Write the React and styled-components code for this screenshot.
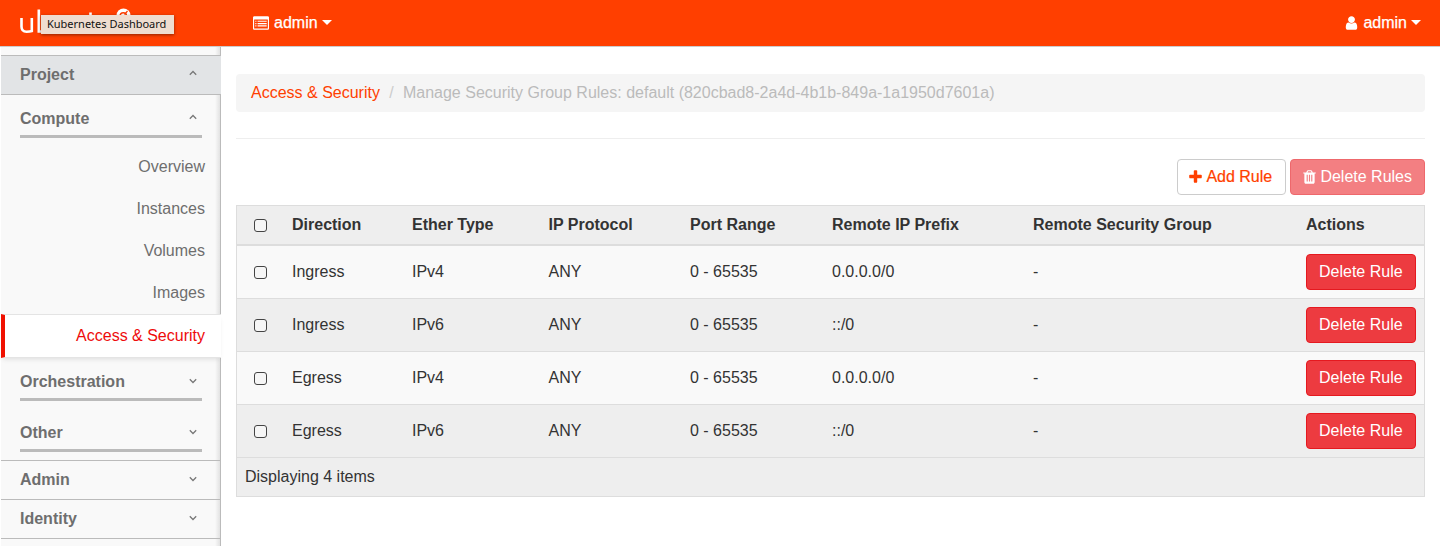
import React from 'react';
import styled, { createGlobalStyle, css } from 'styled-components';

const Global = createGlobalStyle`
  *, *::before, *::after { box-sizing: border-box; }
  html, body { margin: 0; background: #fff; }
  body {
    font: 16px/22px "Liberation Sans", Arial, sans-serif;
    color: #333;
    overflow: hidden;
  }
  #root { height: 546px; }
`;

const Page = styled.div`
  height: 546px;
  display: flex;
  flex-direction: column;
  overflow: hidden;
`;

const TopBar = styled.header`
  position: relative;
  flex: none;
  height: 47px;
  display: flex;
  align-items: flex-start;
  background: #ff3f00;
  border-bottom: 1px solid #ccc;
  color: #fff;
`;

const Brand = styled.div`
  width: 253px;
  height: 46px;
`;

const TopMenu = styled.div`
  display: flex;
  align-items: center;
  height: 46px;
  padding-bottom: 1px;
  margin-left: ${(p) => (p.$end ? 'auto' : 0)};
  margin-right: ${(p) => (p.$end ? '19px' : 0)};
`;

const MenuLabel = styled.span`
  height: 22px;
  margin: 0 4px 0 5px;
  -webkit-text-stroke: 0.25px #fff;
`;

const Caret = styled.span`
  border: 5px solid transparent;
  border-top-color: #fff;
  border-bottom: 0;
`;

const Tooltip = styled.div`
  position: absolute;
  left: 41px;
  top: 15px;
  width: 133px;
  height: 19px;
  display: flex;
  padding-left: 6px;
  background: #efddd0;
  color: #111;
  font: 11px/18px "Noto Sans", "Open Sans", sans-serif;
  white-space: nowrap;
  box-shadow: 0 1px 3px rgba(0, 0, 0, 0.45);
`;

const Icon = styled.svg`
  display: block;
  flex: none;
  height: 16px;
  width: ${(p) => p.$w}px;
  fill: currentColor;
`;

const Body = styled.div`
  flex: 1;
  display: flex;
  min-height: 0;
`;

const Sidebar = styled.nav`
  flex: none;
  width: 220px;
  margin-left: 1px;
  padding-top: 8px;
  color: #6e6e6e;
  background: linear-gradient(to left, #bbb 0, #bbb 1px, #e2e2e2 1px, #f9f9f9 6px);
`;

const Heading = styled.div`
  display: flex;
  justify-content: space-between;
  font-weight: bold;
  padding: 8px 24px 0 19px;
  height: ${(p) => p.$h}px;
  border-top: 1px solid #bbb;
  ${(p) => p.$open && css`
    background: #e2e4e6;
    border-bottom: 1px solid #bbb;
  `}
`;

const Group = styled.div`
  display: flex;
  justify-content: space-between;
  width: 182px;
  height: 30px;
  margin: ${(p) => p.$top}px 0 0 19px;
  padding-right: 5px;
  font-weight: bold;
  border-bottom: 3px solid #bbb;
`;

const Items = styled.div`
  padding-top: 8px;
`;

const Item = styled.div`
  height: 42px;
  padding: 0 16px 0 0;
  line-height: 42px;
  text-align: right;
  ${(p) => p.$active && css`
    height: 44px;
    border: solid #e4e4e4;
    border-width: 1px 0;
    border-left: 4px solid #f01000;
    background: #fff;
    color: #ee0b0b;
    box-shadow: 0 3px 5px -2px rgba(0, 0, 0, 0.12);
  `}
`;

const Chevron = styled.svg`
  width: 8px;
  height: 6px;
  margin-top: ${(p) => (p.$up ? 6 : 7)}px;
  fill: none;
  stroke: #777;
  stroke-width: 1.25;
  transform: ${(p) => (p.$up ? 'none' : 'rotate(180deg)')};
`;

const Main = styled.main`
  flex: 1;
  padding: 27px 15px 0;
`;

const Breadcrumb = styled.div`
  display: flex;
  height: 38px;
  padding: 8px 15px;
  border-radius: 4px;
  background: #f5f5f5;
  color: #bbb;
`;

const Crumb = styled.a`
  color: #ff3f00;
`;

const Slash = styled.span`
  width: 23px;
  text-align: center;
  color: #ccc;
`;

const Rule = styled.hr`
  height: 1px;
  margin: 26px 0 20px;
  border: 0;
  background: #eee;
`;

const Toolbar = styled.div`
  display: flex;
  justify-content: flex-end;
  gap: 4px;
  margin-bottom: 10px;
`;

const Button = styled.button`
  display: flex;
  align-items: center;
  gap: 4px;
  height: 36px;
  padding: 0 12px 1px;
  border: 1px solid ${(p) => (p.$danger ? '#e5191f' : '#ccc')};
  border-radius: 4px;
  background: ${(p) => (p.$danger ? '#ed3b40' : '#fff')};
  color: ${(p) => (p.$danger ? '#fff' : '#ff3f00')};
  font: inherit;
  white-space: nowrap;
  opacity: ${(p) => (p.$faded ? 0.65 : 1)};
`;

const AddButton = styled(Button)`
  width: 109px;
  padding-right: 11px;
  padding-left: 11px;
  -webkit-text-stroke: 0.2px #ff3f00;
`;

const Table = styled.div`
  border: 1px solid #ddd;
`;

const Row = styled.div`
  display: grid;
  grid-template-columns: 47px 120px 136.5px 141.5px 142px 201px 273px 1fr;
  align-items: center;
  height: ${(p) => (p.$head ? 40 : 53)}px;
  padding: 0 8px ${(p) => (p.$head ? 1 : 0)}px;
  border-bottom: ${(p) => (p.$head ? 2 : 1)}px solid #ddd;
  background: ${(p) => (p.$dark ? '#eee' : '#f9f9f9')};
  font-weight: ${(p) => (p.$head ? 'bold' : 'normal')};
`;

const Footer = styled.div`
  height: 38px;
  padding: 8px;
  background: #eee;
`;

const Check = styled.span`
  width: 13px;
  height: 13px;
  margin: ${(p) => (p.$head ? 2 : 1)}px 0 0 9px;
  border: 1px solid #444;
  border-radius: 3px;
  background: #f6f6f6;
`;

const Logo = () => (
  <svg width="253" height="46" viewBox="0 0 253 46" fill="none" stroke="#fff" strokeWidth="2.6">
    <path d="M21.5 18V26.5Q21.5 31.7 26.5 31.7Q30 31.7 31.8 31V18" />
    <path d="M38.8 9.5V31.5H44" />
    <path d="M90.5 12.5V31" />
    <circle cx="123.5" cy="15.5" r="7" fill="#fff" stroke="none" />
    <circle cx="123.3" cy="16" r="3.2" stroke="#ff3f00" strokeWidth="1.4" />
    <path d="M124.5 14.5L127.5 11" stroke="#ff3f00" strokeWidth="1.2" />
  </svg>
);

const ListIcon = () => (
  <Icon $w={16} viewBox="0 0 1792 1792">
    <path fillRule="evenodd" d="M160 128h1472q66 0 113 47t47 113v1216q0 66-47 113t-113 47H160q-66 0-113-47T0 1504V288q0-66 47-113t113-47zM128 544v928q0 32 32 32h1472q32 0 32-32V544q0-32-32-32H160q-32 0-32 32z" />
    <path d="M256 640h128v128H256zM512 640h1024v128H512zM256 896h128v128H256zM512 896h1024v128H512zM256 1152h128v128H256zM512 1152h1024v128H512z" />
  </Icon>
);

const UserIcon = () => (
  <Icon $w={13} viewBox="-64 0 1408 1792">
    <path d="M1280 1399q0 109-62.5 187t-150.5 78h-854q-88 0-150.5-78t-62.5-187q0-85 8.5-160.5t31.5-152 58.5-131 94-89 134.5-34.5q131 128 313 128t313-128q76 0 134.5 34.5t94 89 58.5 131 31.5 152 8.5 160.5zm-256-887q0 159-112.5 271.5t-271.5 112.5-271.5-112.5-112.5-271.5 112.5-271.5 271.5-112.5 271.5 112.5 112.5 271.5z" />
  </Icon>
);

const PlusIcon = () => (
  <Icon $w={13} viewBox="192 0 1408 1792">
    <path d="M1600 736v192q0 40-28 68t-68 28h-416v416q0 40-28 68t-68 28h-192q-40 0-68-28t-28-68v-416h-416q-40 0-68-28t-28-68v-192q0-40 28-68t68-28h416v-416q0-40 28-68t68-28h192q40 0 68 28t28 68v416h416q40 0 68 28t28 68z" />
  </Icon>
);

const TrashIcon = () => (
  <Icon $w={13} viewBox="192 0 1408 1792">
    <path d="M704 1376v-704q0-14-9-23t-23-9h-64q-14 0-23 9t-9 23v704q0 14 9 23t23 9h64q14 0 23-9t9-23zm256 0v-704q0-14-9-23t-23-9h-64q-14 0-23 9t-9 23v704q0 14 9 23t23 9h64q14 0 23-9t9-23zm256 0v-704q0-14-9-23t-23-9h-64q-14 0-23 9t-9 23v704q0 14 9 23t23 9h64q14 0 23-9t9-23zm-544-992h448l-48-117q-7-9-17-11h-317q-10 2-17 11zm928 32v64q0 14-9 23t-23 9h-96v948q0 83-47 143.5t-113 60.5h-832q-66 0-113-58.5t-47-141.5v-952h-96q-14 0-23-9t-9-23v-64q0-14 9-23t23-9h309l70-167q15-37 54-63t79-26h320q40 0 79 26t54 63l70 167h309q14 0 23 9t9 23z" />
  </Icon>
);

const Arrow = ({ up }) => (
  <Chevron $up={up} viewBox="0 0 8 6">
    <path d="M0.8 4.8L4 1.5L7.2 4.8" />
  </Chevron>
);

const columns = ['Direction', 'Ether Type', 'IP Protocol', 'Port Range', 'Remote IP Prefix', 'Remote Security Group', 'Actions'];
const rules = [
  ['Ingress', 'IPv4', 'ANY', '0 - 65535', '0.0.0.0/0', '-'],
  ['Ingress', 'IPv6', 'ANY', '0 - 65535', '::/0', '-'],
  ['Egress', 'IPv4', 'ANY', '0 - 65535', '0.0.0.0/0', '-'],
  ['Egress', 'IPv6', 'ANY', '0 - 65535', '::/0', '-'],
];

export default function App() {
  return (
    <Page>
      <Global />
      <TopBar>
        <Brand><Logo /></Brand>
        <TopMenu>
          <ListIcon />
          <MenuLabel>admin</MenuLabel>
          <Caret />
        </TopMenu>
        <TopMenu $end>
          <UserIcon />
          <MenuLabel>admin</MenuLabel>
          <Caret />
        </TopMenu>
        <Tooltip>Kubernetes Dashboard</Tooltip>
      </TopBar>
      <Body>
        <Sidebar>
          <Heading $open $h={40}>Project<Arrow up /></Heading>
          <Group $top={13}>Compute<Arrow up /></Group>
          <Items>
            <Item>Overview</Item>
            <Item>Instances</Item>
            <Item>Volumes</Item>
            <Item>Images</Item>
            <Item $active>Access &amp; Security</Item>
          </Items>
          <Group $top={13}>Orchestration<Arrow /></Group>
          <Group $top={21}>Other<Arrow /></Group>
          <Items>
            <Heading $h={39}>Admin<Arrow /></Heading>
            <Heading $h={39}>Identity<Arrow /></Heading>
            <Heading $h={8} />
          </Items>
        </Sidebar>
        <Main>
          <Breadcrumb>
            <Crumb>Access &amp; Security</Crumb>
            <Slash>/</Slash>
            <span>Manage Security Group Rules: default (820cbad8-2a4d-4b1b-849a-1a1950d7601a)</span>
          </Breadcrumb>
          <Rule />
          <Toolbar>
            <AddButton><PlusIcon />Add Rule</AddButton>
            <Button $danger $faded><TrashIcon />Delete Rules</Button>
          </Toolbar>
          <Table>
            <Row $head $dark>
              <Check $head />
              {columns.map((c) => <span key={c}>{c}</span>)}
            </Row>
            {rules.map((cells, i) => (
              <Row key={i} $dark={i % 2 === 1}>
                <Check />
                {cells.map((c, j) => <span key={j}>{c}</span>)}
                <Button $danger>Delete Rule</Button>
              </Row>
            ))}
            <Footer>Displaying 4 items</Footer>
          </Table>
        </Main>
      </Body>
    </Page>
  );
}
